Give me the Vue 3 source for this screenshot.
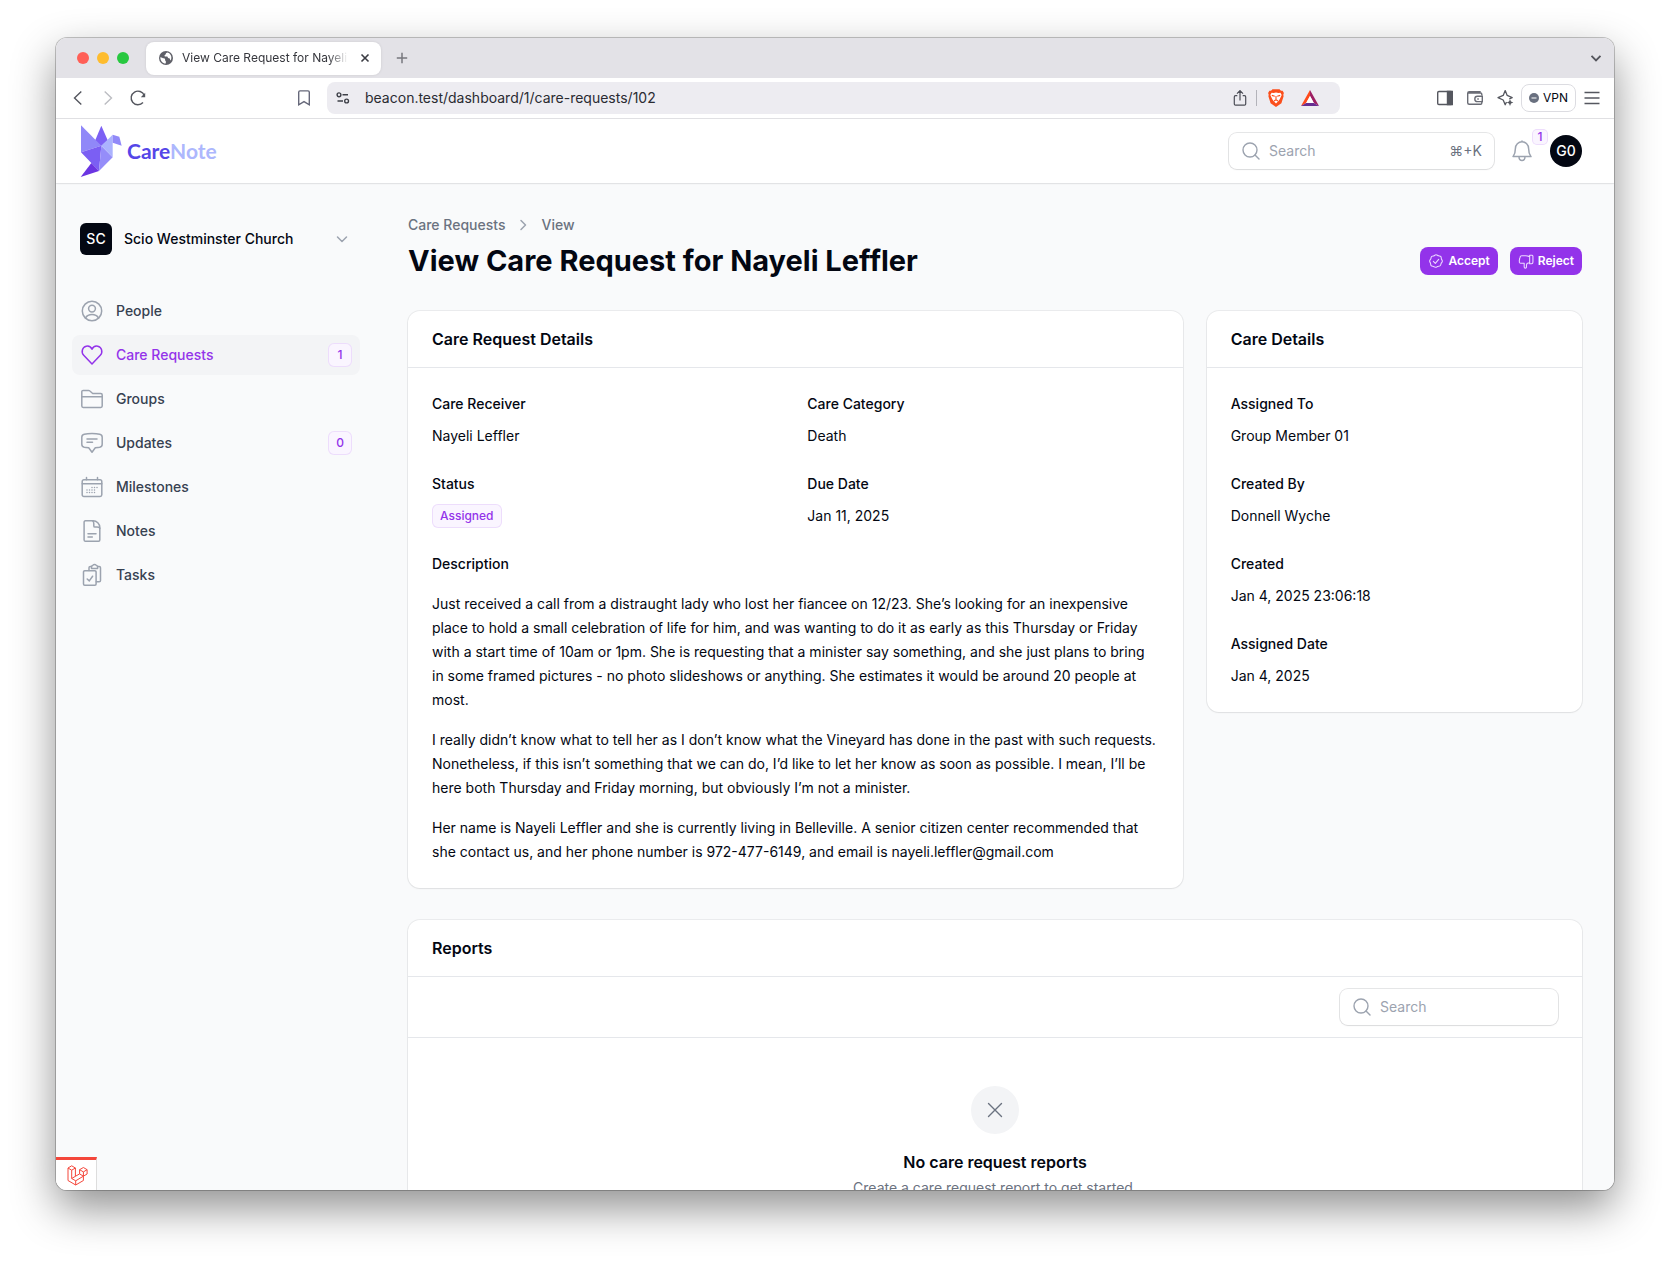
<template>
  <div class="desktop">
    <div class="window">
      <div class="tabstrip">
        <div class="lights">
          <span class="light red"></span>
          <span class="light yellow"></span>
          <span class="light green"></span>
        </div>
        <div class="tab">
          <svg class="favicon" viewBox="0 0 14 14">
            <circle cx="7" cy="7" r="7" fill="#5f6068" />
            <path d="M1.3 6.2c1.6.3 2.3 1 3.6 1 1.2.1 1.3 1 1.2 1.8 0 1 .9.9.8 2l-.2 1.6C3.600 12.500 1.300 9.800 1.300 6.200z" fill="#fff" />
            <path d="M8.600 1.600c-.9.2-1.900.7-1.800 1.500.1.9-1.500.8-1.300 1.800.2.8 1.600.4 2.500.6 1 .3.700 1.500 1.700 1.700.9.100 1.500.400 1.400 1.600l.7.700c1.600-3.600-.2-7-3.200-7.900z" fill="#fff" />
          </svg>
          <span class="tab-title">View Care Request for Nayeli Leffler</span>
          <button class="plain" aria-label="Close tab">
            <svg width="10" height="10" viewBox="0 0 10 10" stroke="#3b3c43" stroke-width="1.6"><path d="M1.500 1.500l7 7M8.500 1.500l-7 7" /></svg>
          </button>
        </div>
        <button class="plain new-tab" aria-label="New tab">
          <svg width="12" height="12" viewBox="0 0 12 12" stroke="#77777e" stroke-width="1.500"><path d="M6 .8v10.400M.8 6h10.400" /></svg>
        </button>
        <button class="plain tab-list" aria-label="Search tabs">
          <svg width="12" height="12" viewBox="0 0 12 12" fill="none" stroke="#55565d" stroke-width="1.900"><path d="M1.500 3.800L6 8.300l4.500-4.500" /></svg>
        </button>
      </div>

      <div class="toolbar">
        <div class="tools-left">
          <button class="plain" aria-label="Back">
            <svg width="20" height="20" viewBox="0 0 20 20" fill="none" stroke="#55575f" stroke-width="1.400"><path d="M13.300 3.400L6.500 10l6.800 6.600" /></svg>
          </button>
          <button class="plain" aria-label="Forward">
            <svg width="20" height="20" viewBox="0 0 20 20" fill="none" stroke="#bcbdc2" stroke-width="1.400"><path d="M6.700 3.400l6.800 6.600-6.800 6.600" /></svg>
          </button>
          <button class="plain" aria-label="Reload">
            <svg width="20" height="20" viewBox="0 0 20 20" fill="none" stroke="#55575f" stroke-width="1.400"><path d="M15 14.500A6.800 6.800 0 1 1 16.300 7.500" /><path d="M17.200 4.800v4.400h-4.400z" fill="#55575f" stroke="none" /></svg>
          </button>
          <button class="plain bookmark" aria-label="Bookmark">
            <svg width="20" height="20" viewBox="0 0 20 20" fill="none" stroke="#66687a" stroke-width="1.400"><path d="M4.700 16.800V4.200a1.300 1.300 0 0 1 1.300-1.300h8a1.300 1.300 0 0 1 1.300 1.300v12.600L10 13.600z" /></svg>
          </button>
        </div>
        <div class="address">
          <svg width="14" height="14" viewBox="0 0 14 14" fill="none" stroke="#3e4048" stroke-width="1.400"><circle cx="3" cy="3.800" r="1.900" /><path d="M6.500 3.800H12M1.500 10h5.500" /><circle cx="10.600" cy="10" r="1.900" /></svg>
          <input v-model="url" class="url" type="text" aria-label="Address" />
          <svg class="share" width="16" height="18" viewBox="0 0 16 18" fill="none" stroke="#4c4e57" stroke-width="1.200"><path d="M5.300 6.700H3.500a1.200 1.200 0 0 0-1.200 1.200v7a1.200 1.200 0 0 0 1.200 1.200h9a1.200 1.200 0 0 0 1.200-1.200v-7a1.200 1.200 0 0 0-1.200-1.200h-1.800M8 11.500V1.800M5 4.600l3-3 3 3" /></svg>
          <span class="divider"></span>
          <svg class="brave" width="16" height="18" viewBox="0 0 16 18">
            <path d="M4.500.2h7l1.500 1.600 1.600-.1 1.300 2.300-.6 1.700.3 1.600-2.200 7L8 18l-5.400-3.700-2.200-7 .3-1.600L.1 4l1.300-2.300 1.600.1z" fill="#fb4f1c" />
            <path d="M3.600 3.700l2 .4L8 3.500l2.400.6 2-.4 1.300 2.200-1.900 4-.9 1.500L8 14.600l-2.900-3.200-.9-1.500-1.900-4z" fill="#fff" />
            <path d="M3.800 6.400l3 .9M12.200 6.400l-3 .9M8 7v3M6 12l2-1.300 2 1.300" fill="none" stroke="#fb4f1c" stroke-width="1.100" />
          </svg>
          <svg width="18" height="16" viewBox="0 0 18 16">
            <path d="M9 0L0 16l5.200-3L9 6z" fill="#ff4a1c" />
            <path d="M9 0l9 16-5.200-3L9 6z" fill="#9e1f63" />
            <path d="M0 16h18l-5.200-3H5.200z" fill="#662d91" />
            <path d="M9 6l3.900 7H5.100z" fill="#fff" />
          </svg>
        </div>
        <div class="tools-right">
          <button class="plain" aria-label="Sidebar">
            <svg width="20" height="20" viewBox="0 0 20 20" fill="none" stroke="#55575f" stroke-width="1.400"><rect x="2.700" y="3.500" width="14.600" height="13" rx="1.200" /><path d="M12.500 3.500h4.800v13h-4.800z" fill="#55575f" /></svg>
          </button>
          <button class="plain" aria-label="Wallet">
            <svg width="20" height="20" viewBox="0 0 20 20" fill="none" stroke="#6a6c75" stroke-width="1.400"><path d="M16.800 7.500v-1.300a1.200 1.200 0 0 0-1.200-1.200H3.200M15 5V3.700H4.200a1.500 1.500 0 0 0-1.500 1.500v9.600a1.500 1.500 0 0 0 1.500 1.500h11.400a1.200 1.200 0 0 0 1.200-1.200V14" /><path d="M17.300 8.200v5.400h-4.800a2.700 2.700 0 0 1 0-5.400zM12.300 11h1.500" /></svg>
          </button>
          <button class="plain" aria-label="Leo AI">
            <svg width="20" height="20" viewBox="0 0 20 20" fill="none" stroke="#55575f" stroke-width="1.300" stroke-linejoin="round"><path d="M11.500 14l-1.300 2.700-2-4.700-5.200-2.400 5.200-2.200 2-4.800 2 4.800 5 2.200-3 1.400" /><path d="M15 11.300l1 2.300 2.300 1-2.300 1-1 2.300-1-2.300-2.300-1 2.300-1z" fill="#55575f" stroke="none" /></svg>
          </button>
          <button class="vpn">
            <svg width="10" height="10" viewBox="0 0 10 10"><circle cx="5" cy="5" r="5" fill="#69707f" /><path d="M2.500 5h5" stroke="#fff" stroke-width="1.200" /></svg>
            VPN
          </button>
          <button class="plain menu" aria-label="Menu">
            <svg width="16" height="14" viewBox="0 0 16 14" stroke="#55575f" stroke-width="1.300"><path d="M.5 1.500h15M.5 7h15M.5 12.500h15" /></svg>
          </button>
        </div>
      </div>

      <div class="app">
        <header class="topbar">
          <a class="brand" href="#">
            <svg width="43" height="53" viewBox="121 299 129 159">
              <path d="M124 300l61 61-61 20z" fill="#9088f8" />
              <path d="M185 301l19 44-19 17-18-18z" fill="#7c60f4" />
              <path d="M124 381l61-20-7 76-23-24z" fill="#7b5ff3" />
              <path d="M185 361l34 35-41 41z" fill="#958df9" />
              <path d="M185 361l34-33v68z" fill="#abb2fe" />
              <path d="M219 328l20 6 7 27-27-9z" fill="#9189f8" />
              <path d="M155 413l23 24-55 18z" fill="#6b35e2" />
            </svg>
            <span class="wordmark">Care<span>Note</span></span>
          </a>
          <div class="top-actions">
            <div class="field global-search">
              <svg viewBox="0 0 20 20" class="glass"><circle cx="9" cy="9" r="7" /><path d="M14 14l4 4" /></svg>
              <input type="search" placeholder="Search" aria-label="Global search" />
              <span class="shortcut">⌘+K</span>
            </div>
            <button class="plain bell" aria-label="Notifications">
              <svg width="24" height="24" viewBox="0 0 24 24" class="line"><path d="M12 2.800a6.600 6.600 0 0 1 6.600 6.600c0 5 1.300 6.600 2.400 8.200H3c1.100-1.600 2.400-3.200 2.400-8.200A6.600 6.600 0 0 1 12 2.800zM12 2.800V2M9 17.800c0 2.200 1.200 3.700 3 3.700s3-1.500 3-3.700" /></svg>
              <span class="bell-count">1</span>
            </button>
            <button class="avatar">G0</button>
          </div>
        </header>

        <div class="body">
          <nav class="sidebar">
            <button class="tenant">
              <span class="tenant-logo">SC</span>
              <span class="tenant-name">Scio Westminster Church</span>
              <svg width="20" height="20" viewBox="0 0 20 20" fill="none" stroke="#9ca3af" stroke-width="1.500" stroke-linecap="round" stroke-linejoin="round"><path d="M5.500 8l4.500 4.500L14.500 8" /></svg>
            </button>
            <ul class="nav">
              <li v-for="item in navItems" :key="item.label">
                <a href="#" class="nav-item" :class="{ active: item.active }">
                  <svg width="24" height="24" viewBox="0 0 24 24" class="line">
                    <path v-for="d in item.paths" :key="d" :d="d" />
                  </svg>
                  <span class="nav-label">{{ item.label }}</span>
                  <span v-if="item.badge" class="badge count">{{ item.badge }}</span>
                </a>
              </li>
            </ul>
          </nav>

          <main class="main">
            <div class="page-header">
              <div>
                <div class="breadcrumbs">
                  <a href="#">Care Requests</a>
                  <svg width="20" height="20" viewBox="0 0 20 20" fill="none" stroke="#9ca3af" stroke-width="1.500" stroke-linecap="round" stroke-linejoin="round"><path d="M8 5.500l4.500 4.500L8 14.500" /></svg>
                  <a href="#">View</a>
                </div>
                <h1>View Care Request for Nayeli Leffler</h1>
              </div>
              <div class="actions">
                <button class="btn">
                  <svg width="16" height="16" viewBox="0 0 24 24"><path d="M12 2.500c1.600 0 2.300 1.300 3.700 1.700s2.700 0 3.600 1.200.4 2.300.9 3.700 1.500 1.700 1.300 3.400-1.500 2-1.900 3.400-.4 2.700-1.700 3.400-2.500.3-3.700 1-1.400 1.300-2.700 1.200-1.900-1-3.200-1.400-2.600-.1-3.600-1.200-.5-2.400-1-3.700-1.400-1.900-1.200-3.400 1.400-2 1.800-3.400.2-2.500 1.400-3.400 2.300-.2 3.600-.8S10.600 2.500 12 2.500zM8 12.500l3 3 5-6" /></svg>
                  Accept
                </button>
                <button class="btn">
                  <svg width="16" height="16" viewBox="0 0 24 24"><path d="M17.500 14.500c-2.800 0-4.800 1.600-4.800 4.200v2.300a1.600 1.600 0 0 1-3.400 0v-5.500H4.200a2.300 2.300 0 0 1-2-1.300c-.3-.7-.3-1.500 0-2.200-.4-.8-.3-1.600.2-2.300-.3-1 0-1.800.7-2.400 0-2 .8-3.300 2.800-3.300h5.600c2 0 3.500 1.400 6 1.400M17.500 3.500h3.400a1.500 1.500 0 0 1 1.500 1.500v9a2 2 0 0 1-2 2h-2.900z" /></svg>
                  Reject
                </button>
              </div>
            </div>

            <div class="columns">
              <section class="card wide">
                <h2>Care Request Details</h2>
                <dl class="details two">
                  <div v-for="entry in requestDetails" :key="entry.label">
                    <dt>{{ entry.label }}</dt>
                    <dd>
                      <span v-if="entry.badge" class="badge">{{ entry.value }}</span>
                      <template v-else>{{ entry.value }}</template>
                    </dd>
                  </div>
                  <div class="full">
                    <dt>Description</dt>
                    <dd class="prose">
                      <p v-for="text in description" :key="text">{{ text }}</p>
                    </dd>
                  </div>
                </dl>
              </section>

              <section class="card">
                <h2>Care Details</h2>
                <dl class="details">
                  <div v-for="entry in careDetails" :key="entry.label">
                    <dt>{{ entry.label }}</dt>
                    <dd>{{ entry.value }}</dd>
                  </div>
                </dl>
              </section>
            </div>

            <section class="card">
              <h2>Reports</h2>
              <div class="table-tools">
                <div class="field">
                  <svg viewBox="0 0 20 20" class="glass"><circle cx="9" cy="9" r="7" /><path d="M14 14l4 4" /></svg>
                  <input type="search" placeholder="Search" aria-label="Search reports" />
                </div>
              </div>
              <div class="empty">
                <div class="empty-icon">
                  <svg width="24" height="24" viewBox="0 0 24 24" fill="none" stroke="#6b7280" stroke-width="1.400" stroke-linecap="round"><path d="M5.500 5.500l13 13M18.500 5.500l-13 13" /></svg>
                </div>
                <h3>No care request reports</h3>
                <p>Create a care request report to get started.</p>
              </div>
            </section>
          </main>
        </div>
      </div>

      <a class="debugbar" href="#" aria-label="Debugbar">
        <svg width="21" height="21" viewBox="0 0 21 21" fill="none" stroke="#f4463a" stroke-width="1" stroke-linejoin="round"><path d="M1 3l3.700-2.200L8.400 3v8.300l4.200-2.400V4.700l3.800-2.200 3.700 2.200V9l-3.700 2.200v4.300L8.700 20 1 15.500zM1 3l3.700 2.200L8.400 3M4.700 5.200v8.300l3.700-2.200M12.600 4.700l3.800 2.200 3.700-2.200M16.400 6.900v4.300M4.700 13.500l4 2.300 7.700-4.600-3.800-2.300M8.700 15.800V20" /></svg>
      </a>
    </div>
  </div>
</template>

<script setup>
import { ref } from 'vue'

const url = ref('beacon.test/dashboard/1/care-requests/102')

const navItems = [
  {
    label: 'People',
    paths: [
      'M12 2.300a9.700 9.700 0 1 1 0 19.400a9.700 9.700 0 1 1 0-19.400z',
      'M12 6.200a3.400 3.400 0 1 1 0 6.800a3.400 3.400 0 1 1 0-6.800z',
      'M5.500 19c1.300-2.200 3.700-3.400 6.500-3.400s5.200 1.200 6.500 3.400',
    ],
  },
  {
    label: 'Care Requests',
    badge: '1',
    active: true,
    paths: [
      'M12 21l-8.300-8.700C.9 9.300 2.200 4 6.200 3.200 8.700 2.700 11 4 12 6.300 13 4 15.300 2.700 17.800 3.200c4 .8 5.300 6.100 2.500 9.100z',
    ],
  },
  {
    label: 'Groups',
    paths: [
      'M1.800 19V4.800a1.400 1.400 0 0 1 1.400-1.400h5.400a1.500 1.500 0 0 1 1 .4l2.800 2.400a1.500 1.500 0 0 0 1 .4h7.400a1.400 1.400 0 0 1 1.400 1.400V19a1.400 1.400 0 0 1-1.400 1.400H3.200A1.400 1.400 0 0 1 1.800 19z',
      'M1.800 9.800h20.400',
    ],
  },
  {
    label: 'Updates',
    badge: '0',
    paths: [
      'M12 2.600c3 0 5.700.2 7.700.6 1.400.3 2.500 1.500 2.500 3v7.100c0 1.500-1.100 2.700-2.500 3-1.200.2-2.800.3-4.400.4L12 21.200l-3.300-4.500c-1.600-.1-3.200-.2-4.400-.4-1.400-.3-2.500-1.500-2.500-3V6.200c0-1.500 1.100-2.700 2.500-3 2-.4 4.700-.6 7.700-.6z',
      'M7 8h10',
      'M7 11.300h5.500',
    ],
  },
  {
    label: 'Milestones',
    paths: [
      'M3.900 4.800h16.200a1.700 1.700 0 0 1 1.700 1.700v13.300a1.700 1.700 0 0 1-1.700 1.700H3.900a1.700 1.700 0 0 1-1.700-1.700V6.500a1.700 1.700 0 0 1 1.700-1.700z',
      'M2.200 8.800h19.600',
      'M6.500 4.800V2.500M17.500 4.800V2.500',
      'M12 12.500h.01M14.500 12.500h.01M17 12.500h.01M9.500 15h.01M12 15h.01M14.500 15h.01M7 15h.01M7 17.600h.01M9.500 17.600h.01M12 17.600h.01M14.500 17.600h.01',
    ],
  },
  {
    label: 'Notes',
    paths: [
      'M5.500 1.800h7.700c3.500 0 6.600 3.200 6.600 6.600V21a1.200 1.200 0 0 1-1.200 1.200H5.400A1.300 1.300 0 0 1 4.100 21V3a1.300 1.300 0 0 1 1.400-1.200z',
      'M12.500 1.800c1.300.4 1.300 1.600 1.300 3v2.100c0 .8.400 1.200 1.200 1.200h2c1.500 0 2.700.4 2.800 1.400',
      'M8 14.800h8',
      'M8 18h4.300',
    ],
  },
  {
    label: 'Tasks',
    paths: [
      'M4.700 7.700h10.200a1.200 1.200 0 0 1 1.200 1.200V21a1.200 1.200 0 0 1-1.200 1.200H4.700A1.200 1.200 0 0 1 3.500 21V8.900a1.200 1.200 0 0 1 1.200-1.200z',
      'M9 7.500V4.800a1.300 1.300 0 0 1 1.300-1.300h1.200M17.600 3.500h1.600a1.300 1.300 0 0 1 1.300 1.300v12.700a1.300 1.300 0 0 1-1.300 1.300h-2.900',
      'M11.500 5.500V3.600c0-1 1-.8 1.500-1.500.7-.9 2.400-.9 3.100 0 .5.700 1.500.5 1.500 1.500v1.900z',
      'M7.200 16l2.100 1.900 3.300-4.700',
    ],
  },
]

const requestDetails = [
  { label: 'Care Receiver', value: 'Nayeli Leffler' },
  { label: 'Care Category', value: 'Death' },
  { label: 'Status', value: 'Assigned', badge: true },
  { label: 'Due Date', value: 'Jan 11, 2025' },
]

const careDetails = [
  { label: 'Assigned To', value: 'Group Member 01' },
  { label: 'Created By', value: 'Donnell Wyche' },
  { label: 'Created', value: 'Jan 4, 2025 23:06:18' },
  { label: 'Assigned Date', value: 'Jan 4, 2025' },
]

const description = [
  'Just received a call from a distraught lady who lost her fiancee on 12/23. She’s looking for an inexpensive place to hold a small celebration of life for him, and was wanting to do it as early as this Thursday or Friday with a start time of 10am or 1pm. She is requesting that a minister say something, and she just plans to bring in some framed pictures - no photo slideshows or anything. She estimates it would be around 20 people at most.',
  'I really didn’t know what to tell her as I don’t know what the Vineyard has done in the past with such requests. Nonetheless, if this isn’t something that we can do, I’d like to let her know as soon as possible. I mean, I’ll be here both Thursday and Friday morning, but obviously I’m not a minister.',
  'Her name is Nayeli Leffler and she is currently living in Belleville. A senior citizen center recommended that she contact us, and her phone number is 972-477-6149, and email is nayeli.leffler@gmail.com',
]
</script>

<style>
body {
  background: #fff;
}
</style>

<style scoped>
* {
  box-sizing: border-box;
}

.desktop {
  height: 100vh;
  padding: 38px 56px 74px;
  overflow: hidden;
  font-family: Inter, 'Liberation Sans', sans-serif;
  font-size: 14px;
  line-height: 20px;
  color: #030712;
}

h1, h2, h3, p, ul, dl, dd {
  margin: 0;
  padding: 0;
}

ul {
  list-style: none;
}

a {
  color: inherit;
  text-decoration: none;
}

button, input {
  font: inherit;
  color: inherit;
  padding: 0;
  border: 0;
  background: none;
}

input {
  min-width: 0;
  height: 20px;
  outline: none;
}

svg {
  display: block;
  flex: none;
}

.plain {
  display: flex;
}

.window {
  position: relative;
  display: flex;
  flex-direction: column;
  height: 100%;
  border-radius: 11px;
  overflow: hidden;
  background: #fff;
  box-shadow: 0 0 0 1px rgba(0, 0, 0, 0.22), 0 18px 44px rgba(0, 0, 0, 0.44);
}

/* browser chrome */
.tabstrip {
  flex: none;
  display: flex;
  align-items: center;
  height: 40px;
  padding: 0 12px 0 21px;
  background: #e3e2e7;
}

.lights {
  display: flex;
  gap: 8px;
}

.light {
  width: 12px;
  height: 12px;
  border-radius: 50%;
}

.red { background: #ff5f57; }
.yellow { background: #febc2e; }
.green { background: #28c840; }

.tab {
  display: flex;
  align-items: center;
  gap: 9px;
  width: 235px;
  height: 33px;
  margin-left: 17px;
  padding: 0 11px 0 13px;
  border-radius: 8px;
  background: #fff;
  box-shadow: 0 0 3px rgba(0, 0, 0, 0.1);
}

.favicon {
  width: 14px;
  height: 14px;
}

.tab-title {
  flex: 1;
  margin-right: 3px;
  overflow: hidden;
  white-space: nowrap;
  font-size: 12px;
  line-height: 16px;
  color: #36373d;
  mask-image: linear-gradient(to right, #000 88%, transparent);
}

.new-tab {
  margin-left: 15px;
}

.tab-list {
  margin-left: auto;
}

.toolbar {
  flex: none;
  display: grid;
  grid-template-columns: 271px 1fr 274px;
  align-items: center;
  height: 41px;
  border-bottom: 1px solid #e0e0e3;
}

.tools-left {
  display: flex;
  gap: 10px;
  padding: 0 13px 0 12px;
}

.bookmark {
  margin-left: auto;
}

.address {
  display: flex;
  align-items: center;
  height: 32px;
  padding: 0 21px 0 9px;
  border-radius: 8px;
  background: #edecf1;
}

.url {
  flex: 1;
  margin-left: 15px;
  color: #2a2b31;
}

.divider {
  width: 1px;
  height: 16px;
  margin: 0 11px 0 8px;
  background: #b3b3ba;
}

.brave {
  margin-right: 17px;
}

.tools-right {
  display: flex;
  align-items: center;
  justify-content: flex-end;
  gap: 10px;
  padding-right: 14px;
}

.vpn {
  display: flex;
  align-items: center;
  gap: 4px;
  height: 28px;
  margin: 0 -2px 0 -4px;
  padding: 0 7px;
  border: 1px solid #dcdce1;
  border-radius: 8px;
  font-size: 12px;
}

/* application */
.app {
  flex: 1;
  min-height: 0;
  overflow: hidden;
  background: #f9fafb;
}

.topbar {
  position: relative;
  display: flex;
  align-items: center;
  justify-content: space-between;
  height: 64px;
  padding: 0 32px 0 24px;
  background: #fff;
  box-shadow: 0 0 0 1px rgba(3, 7, 18, 0.06), 0 1px 2px rgba(0, 0, 0, 0.05);
}

.brand {
  display: flex;
  align-items: center;
  gap: 4px;
}

.wordmark {
  font-family: Lato, sans-serif;
  font-size: 21px;
  font-weight: 700;
  line-height: 24px;
  color: #5546e8;
}

.wordmark span {
  color: #adb7fd;
}

.top-actions {
  display: flex;
  align-items: center;
  gap: 16px;
}

.field {
  display: flex;
  align-items: center;
  gap: 8px;
  width: 218px;
  height: 36px;
  padding: 0 12px;
  border-radius: 8px;
  background: #fff;
  box-shadow: 0 0 0 1px rgba(3, 7, 18, 0.1), 0 1px 2px rgba(0, 0, 0, 0.05);
}

.global-search {
  width: 265px;
}

.field input {
  flex: 1;
}

.field input::placeholder {
  color: #9ca3af;
  opacity: 1;
}

.shortcut {
  color: #6b7280;
}

.glass {
  width: 20px;
  height: 20px;
  fill: none;
  stroke: #9ca3af;
  stroke-width: 1.4;
  stroke-linecap: round;
}

.line {
  fill: none;
  stroke: #9ca3af;
  stroke-width: 1.5;
  stroke-linecap: round;
  stroke-linejoin: round;
}

.bell {
  position: relative;
}

.bell-count {
  position: absolute;
  left: 22px;
  top: -10px;
  width: 16px;
  height: 16px;
  border-radius: 5px;
  background: #faf5ff;
  box-shadow: inset 0 0 0 1px rgba(147, 51, 234, 0.12);
  font-size: 12px;
  font-weight: 500;
  line-height: 16px;
  text-align: center;
  color: #9333ea;
}

.avatar {
  width: 32px;
  height: 32px;
  border-radius: 50%;
  background: #030712;
  font-weight: 500;
  color: #fff;
}

.body {
  display: flex;
}

.sidebar {
  flex: none;
  width: 320px;
  padding: 32px 16px;
}

.tenant {
  display: flex;
  align-items: center;
  gap: 12px;
  width: 100%;
  padding: 8px;
  text-align: left;
  font-weight: 500;
}

.tenant-logo {
  width: 32px;
  height: 32px;
  border-radius: 6px;
  background: #030712;
  line-height: 32px;
  text-align: center;
  color: #fff;
}

.tenant-name,
.nav-label {
  flex: 1;
}

.nav {
  display: flex;
  flex-direction: column;
  gap: 4px;
  margin-top: 28px;
}

.nav-item {
  display: flex;
  align-items: center;
  gap: 12px;
  height: 40px;
  padding: 0 8px;
  border-radius: 8px;
  font-weight: 500;
  color: #374151;
}

.nav-item.active {
  background: #f3f4f6;
  color: #9333ea;
}

.active .line {
  stroke: #9333ea;
}

.badge {
  display: inline-block;
  height: 24px;
  padding: 0 8px;
  border-radius: 6px;
  background: #faf5ff;
  box-shadow: inset 0 0 0 1px rgba(147, 51, 234, 0.12);
  font-size: 12px;
  font-weight: 500;
  line-height: 24px;
  vertical-align: top;
  color: #9333ea;
}

.count {
  width: 24px;
  padding: 0;
  text-align: center;
}

.main {
  flex: 1;
  min-width: 0;
  display: flex;
  flex-direction: column;
  gap: 32px;
  padding: 32px;
}

.page-header {
  display: flex;
  align-items: center;
  justify-content: space-between;
}

.breadcrumbs {
  display: flex;
  gap: 8px;
  margin-bottom: 8px;
  font-weight: 500;
  color: #6b7280;
}

h1 {
  font-size: 29px;
  font-weight: 700;
  line-height: 36px;
}

.actions {
  display: flex;
  gap: 12px;
  margin-top: 28px;
}

.btn {
  display: flex;
  align-items: center;
  gap: 4px;
  height: 28px;
  padding: 0 8px;
  border-radius: 8px;
  background: #9333ea;
  font-size: 12px;
  font-weight: 600;
  line-height: 16px;
  color: #fff;
}

.btn svg {
  fill: none;
  stroke: #ecd9ff;
  stroke-width: 1.6;
  stroke-linecap: round;
  stroke-linejoin: round;
}

.columns {
  display: grid;
  grid-template-columns: repeat(3, minmax(0, 1fr));
  align-items: start;
  gap: 24px;
}

.card {
  border-radius: 12px;
  background: #fff;
  box-shadow: 0 0 0 1px rgba(3, 7, 18, 0.06), 0 1px 2px rgba(0, 0, 0, 0.05);
}

.wide {
  grid-column: span 2;
}

h2 {
  padding: 16px 24px;
  border-bottom: 1px solid #e5e7eb;
  font-size: 16px;
  font-weight: 600;
  line-height: 24px;
}

.details {
  display: grid;
  gap: 24px;
  padding: 24px;
  line-height: 24px;
}

.two {
  grid-template-columns: repeat(2, minmax(0, 1fr));
}

.full {
  grid-column: 1 / -1;
}

dt {
  margin-bottom: 8px;
  font-weight: 500;
}

.prose {
  display: flex;
  flex-direction: column;
  gap: 16px;
  padding-top: 8px;
}

.table-tools {
  display: flex;
  justify-content: flex-end;
  padding: 12px 24px;
  border-bottom: 1px solid #e5e7eb;
}

.empty {
  display: flex;
  flex-direction: column;
  align-items: center;
  padding: 48px 24px;
}

.empty-icon {
  padding: 12px;
  border-radius: 50%;
  background: #f3f4f6;
}

h3 {
  margin-top: 16px;
  font-size: 16px;
  font-weight: 600;
  line-height: 24px;
}

.empty p {
  margin-top: 4px;
  color: #6b7280;
}

/* pinned to the window corner, above the page */
.debugbar {
  position: absolute;
  left: 0;
  bottom: 0;
  width: 41px;
  height: 33px;
  padding: 5px 0 0 11px;
  border-top: 3px solid #f4463a;
  border-right: 1px solid #ddd;
  background: #fff;
}
</style>
